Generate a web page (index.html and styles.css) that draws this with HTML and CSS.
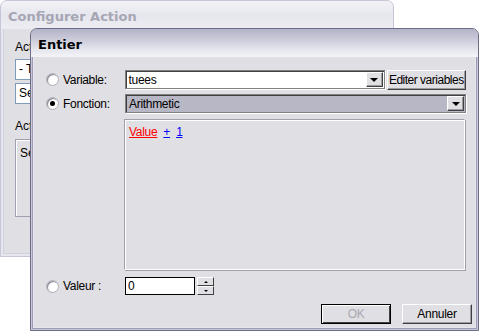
FILE: index.html
```html
<!DOCTYPE html>
<html>
<head>
    <title>Entier</title>
    <link rel="stylesheet" href="styles.css">
</head>
<body>
<div class="desktop">
    <!-- Fenetre derriere (inactive) -->
    <div class="window back">
        <div class="titlebar inactive">Configurer Action</div>
        <div class="client back-client">
            <div class="back-label">Act</div>
            <div class="back-field">- T</div>
            <div class="back-field">Se</div>
            <div class="back-label second">Act</div>
            <div class="back-list">Se</div>
        </div>
    </div>

    <!-- Fenetre Entier -->
    <div class="window front">
        <div class="titlebar active">Entier</div>
        <div class="client front-client">
            <div class="row">
                <span class="radio"></span>
                <label class="row-label">Variable:</label>
                <div class="combo white">
                    <span class="combo-text">tuees</span>
                    <span class="drop-btn"><span class="arrow"></span></span>
                </div>
                <button class="btn small">Editer variables</button>
            </div>

            <div class="row">
                <span class="radio checked"></span>
                <label class="row-label">Fonction:</label>
                <div class="combo grey wide">
                    <span class="combo-text">Arithmetic</span>
                    <span class="drop-btn"><span class="arrow"></span></span>
                </div>
            </div>

            <div class="expr-row">
                <div class="expr-panel">
                    <a class="tok red">Value</a>
                    <a class="tok blue">+</a>
                    <a class="tok blue">1</a>
                </div>
            </div>

            <div class="row valeur-row">
                <span class="radio"></span>
                <label class="row-label">Valeur :</label>
                <div class="num-input">0</div>
                <div class="spinner">
                    <span class="spin-btn"><span class="up"></span></span>
                    <span class="spin-btn"><span class="down"></span></span>
                </div>
            </div>

            <div class="buttons">
                <button class="btn ok" disabled>OK</button>
                <button class="btn">Annuler</button>
            </div>
        </div>
    </div>
</div>
</body>
</html>
```

FILE: styles.css
```css
body {
    margin: 0;
    padding: 0;
    background-color: #fff;
    font-family: "Liberation Sans", sans-serif;
    font-size: 11px;
}

.desktop {
    position: relative;
    width: 480px;
    height: 331px;
    overflow: hidden;
}

.window {
    position: absolute;
    box-sizing: border-box;
    background-color: #e0dfe3;
    display: flex;
    flex-direction: column;
    border-radius: 7px 7px 0 0;
}

.back {
    left: 0;
    top: 0;
    width: 394px;
    height: 257px;
    border: 1px solid #c6c6d6;
    box-shadow: inset 0 0 0 2px #e6e6ee, inset 0 0 0 3px #d0d0de;
}

.front {
    left: 30px;
    top: 28px;
    width: 449px;
    height: 303px;
    border: 1px solid #6c6c88;
    box-shadow: inset 0 0 0 1px #c8c8d8, inset 0 0 0 2px #9c9cb4, inset 0 0 0 3px #e6e6ee;
}

.titlebar {
    height: 28px;
    line-height: 32px;
    padding-left: 7px;
    font-family: "DejaVu Sans", sans-serif;
    font-weight: bold;
    font-size: 13px;
    border-radius: 6px 6px 0 0;
}

.titlebar.inactive {
    color: #a6a6b4;
    background: linear-gradient(#f2f2f6, #e6e6ee 50%, #ececf2);
}

.titlebar.active {
    color: #000;
    background: linear-gradient(#b4b4c8, #c6c6d6 30%, #e6e6ee 75%, #f4f4f8);
}

.client {
    flex: 1;
    margin: 0 3px 3px 3px;
    position: relative;
}

/* fenetre derriere */
.back-client {
    padding: 10px 0 0 11px;
    font-size: 12px;
}

.back-label {
    height: 16px;
    line-height: 16px;
    margin-bottom: 4px;
}

.back-label.second {
    margin-top: 14px;
    margin-bottom: 5px;
}

.back-field {
    width: 100px;
    height: 19px;
    line-height: 19px;
    padding-left: 3px;
    margin-bottom: 3px;
    background-color: #fff;
    border: 1px solid #7f9db9;
}

.back-list {
    width: 100px;
    height: 70px;
    padding: 6px 0 0 4px;
    border: 1px solid #a0a0b0;
    box-shadow: inset 1px 1px 0 #fff;
}

/* fenetre Entier */
.front-client {
    padding: 13px 9px 0 12px;
    display: flex;
    flex-direction: column;
}

.row {
    display: flex;
    align-items: center;
    height: 19px;
    margin-bottom: 5px;
}

.radio {
    width: 11px;
    height: 11px;
    border-radius: 50%;
    background: radial-gradient(circle at 60% 60%, #fff 40%, #e4e4ea 80%);
    border: 1px solid #b0b0bc;
    box-shadow: inset 1px 1px 0 #8c8c98;
    position: relative;
    flex-shrink: 0;
}

.radio.checked::after {
    content: "";
    position: absolute;
    left: 3px;
    top: 3px;
    width: 5px;
    height: 5px;
    border-radius: 50%;
    background-color: #000;
}

.row-label {
    width: 60px;
    padding-left: 4px;
    margin-right: 2px;
    font-size: 12px;
    letter-spacing: -0.3px;
}

.combo {
    box-sizing: border-box;
    height: 19px;
    display: flex;
    align-items: center;
    border: 1px solid #808080;
    box-shadow: inset 1px 1px 0 #404040, 1px 1px 0 #fff;
}

.combo.white {
    width: 262px;
    background-color: #fff;
}

.combo.grey {
    background-color: #b7b7c5;
}

.combo.wide {
    width: 341px;
}

.combo-text {
    flex: 1;
    padding-left: 3px;
    font-size: 12px;
    letter-spacing: -0.3px;
}

.drop-btn {
    box-sizing: border-box;
    width: 17px;
    height: 15px;
    margin-right: 1px;
    background-color: #e0dfe3;
    border: 1px solid;
    border-color: #fff #404040 #404040 #fff;
    box-shadow: inset -1px -1px 0 #9d9da1;
    display: flex;
    align-items: center;
    justify-content: center;
}

.arrow {
    width: 0;
    height: 0;
    border-left: 4px solid transparent;
    border-right: 4px solid transparent;
    border-top: 4px solid #000;
    margin-top: 1px;
}

.btn {
    box-sizing: border-box;
    height: 20px;
    padding: 0 4px;
    background-color: #e0dfe3;
    border: 1px solid;
    border-color: #fff #404040 #404040 #fff;
    box-shadow: inset -1px -1px 0 #9d9da1;
    font-family: "Liberation Sans", sans-serif;
    font-size: 12px;
    letter-spacing: -0.3px;
    color: #000;
    white-space: nowrap;
}

.btn.small {
    width: 80px;
    margin-left: 2px;
    padding: 0;
    letter-spacing: -0.5px;
}

.expr-row {
    padding-left: 78px;
    margin-top: 1px;
    margin-bottom: 7px;
}

.expr-panel {
    box-sizing: border-box;
    width: 341px;
    height: 151px;
    padding: 5px 0 0 4px;
    border: 1px solid;
    border-color: #a0a0a4 #fff #fff #a0a0a4;
    box-shadow: 1px 1px 0 #a0a0a4, inset 1px 1px 0 #fff;
    font-size: 12px;
    letter-spacing: -0.3px;
}

.tok {
    text-decoration: underline;
    margin-right: 3px;
}

.tok.red {
    color: #f00;
}

.tok.blue {
    color: #00f;
}

.valeur-row {
    height: 18px;
    margin-bottom: 9px;
}

.num-input {
    box-sizing: border-box;
    width: 70px;
    height: 18px;
    line-height: 16px;
    padding-left: 2px;
    background-color: #fff;
    border: 1px solid #000;
    font-size: 12px;
}

.spinner {
    margin-left: 2px;
    display: flex;
    flex-direction: column;
}

.spin-btn {
    box-sizing: border-box;
    width: 17px;
    height: 9px;
    background-color: #e0dfe3;
    border: 1px solid;
    border-color: #fff #404040 #404040 #fff;
    display: flex;
    align-items: center;
    justify-content: center;
}

.up {
    border-left: 2px solid transparent;
    border-right: 2px solid transparent;
    border-bottom: 2px solid #000;
}

.down {
    border-left: 2px solid transparent;
    border-right: 2px solid transparent;
    border-top: 2px solid #000;
}

.buttons {
    display: flex;
    justify-content: flex-end;
    gap: 11px;
    margin-right: -6px;
}

.buttons .btn {
    width: 70px;
}

.btn.ok {
    color: #a8a8b0;
    border: 1px solid #000;
    box-shadow: inset 1px 1px 0 #fff, inset -1px -1px 0 #404040;
}
```
